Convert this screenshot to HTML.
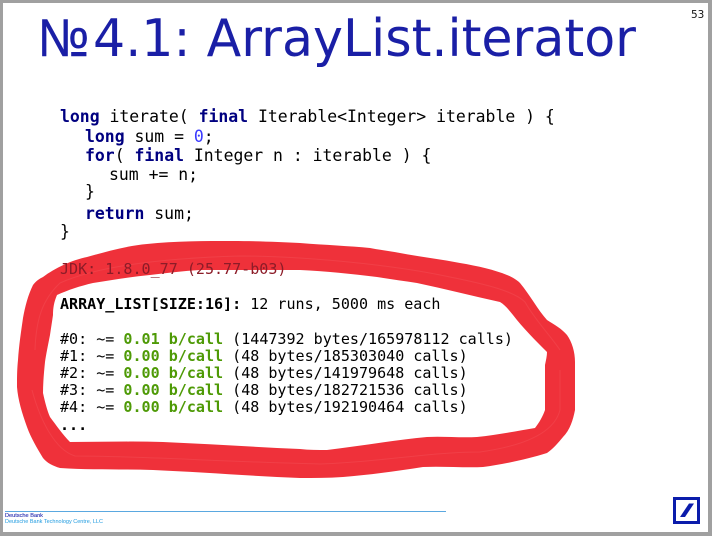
<!DOCTYPE html>
<html><head><meta charset="utf-8"><style>
html,body{margin:0;padding:0;background:#a0a0a0;width:712px;height:536px;overflow:hidden}
svg{position:absolute;left:0;top:0;display:block}
text{white-space:pre}
.c{font-family:"DejaVu Sans Mono",monospace;font-size:16.46px;fill:#000}
.o{font-family:"DejaVu Sans Mono",monospace;font-size:15.06px;fill:#000}
.k{font-weight:bold;fill:#000080}
.g{font-weight:bold;fill:#4e9a06}
.b{font-weight:bold}
</style></head><body>
<svg width="712" height="536" viewBox="0 0 712 536" xmlns="http://www.w3.org/2000/svg">
<rect x="3" y="3" width="705" height="529" fill="#fff"/>
<text x="38" y="56" font-family="'Liberation Sans',sans-serif" font-size="53" fill="#1a1fa6" stroke="#1a1fa6" stroke-width=".5" textLength="51" lengthAdjust="spacingAndGlyphs">№</text>
<text x="93" y="56" font-family="'DejaVu Sans',sans-serif" font-size="52" fill="#1a1fa6" textLength="543" lengthAdjust="spacingAndGlyphs">4.1: ArrayList.iterator</text>
<text x="691" y="18" font-family="'DejaVu Sans',sans-serif" font-size="10.5" fill="#111">53</text>

<text class="c" x="60" y="122"><tspan class="k">long</tspan> iterate( <tspan class="k">final</tspan> Iterable&lt;Integer&gt; iterable ) {</text>
<text class="c" x="85" y="142"><tspan class="k">long</tspan> sum = <tspan fill="#3a3aff">0</tspan>;</text>
<text class="c" x="85" y="161"><tspan class="k">for</tspan>( <tspan class="k">final</tspan> Integer n : iterable ) {</text>
<text class="c" x="109" y="180">sum += n;</text>
<text class="c" x="85" y="197">}</text>
<text class="c" x="85" y="219"><tspan class="k">return</tspan> sum;</text>
<text class="c" x="60" y="237">}</text>

<text class="o" x="60" y="309"><tspan class="b">ARRAY_LIST[SIZE:16]:</tspan> 12 runs, 5000 ms each</text>
<text class="o" x="60" y="344">#0: ~= <tspan class="g">0.01 b/call</tspan> (1447392 bytes/165978112 calls)</text>
<text class="o" x="60" y="361">#1: ~= <tspan class="g">0.00 b/call</tspan> (48 bytes/185303040 calls)</text>
<text class="o" x="60" y="378">#2: ~= <tspan class="g">0.00 b/call</tspan> (48 bytes/141979648 calls)</text>
<text class="o" x="60" y="395">#3: ~= <tspan class="g">0.00 b/call</tspan> (48 bytes/182721536 calls)</text>
<text class="o" x="60" y="412">#4: ~= <tspan class="g">0.00 b/call</tspan> (48 bytes/192190464 calls)</text>
<text class="o b" x="60" y="430">...</text>

<path fill="#ee2029" fill-opacity=".92" fill-rule="evenodd" d="M43 277 C55 268 72 260 87 257 C105 252 125 246 147 244 C175 241 205 241 233 241 C255 241 280 242 300 243 C325 245 350 246 370 248 C380 250 390 251 400 253 C420 257 440 259 460 263 C478 266 495 270 507 275 C512 277 517 280 520 283 C530 295 538 310 547 320 C555 325 562 329 567 335 C572 342 575 352 575 362 L575 410 C573 420 570 430 563 437 C558 443 553 449 547 453 C528 459 505 464 483 467 C465 468 443 466 423 467 C397 471 370 475 343 477 C328 478 314 478 300 478 C250 476 200 472 153 470 C122 469 90 470 60 468 C53 466 47 463 43 458 C37 448 31 438 27 427 C22 413 18 400 17 387 C17 378 17 370 18 360 C19 345 21 332 23 318 C25 307 28 295 33 285 C36 281 39 279 43 277 Z
M57 295 C54 302 53 308 53 315 C52 322 51 328 50 335 C48 345 46 355 45 362 C44 372 43 383 43 393 C45 402 47 410 50 417 C56 425 63 435 70 442 C100 442 132 441 163 442 C210 444 255 447 300 449 C309 450 318 450 327 450 C360 446 395 440 427 437 C443 436 460 438 477 437 C497 435 517 431 535 428 C539 423 543 416 545 410 L545 365 C546 360 547 356 547 352 C535 340 523 328 513 315 C509 310 505 305 500 302 C473 296 445 289 417 283 C404 281 390 279 377 277 C352 274 325 271 300 270 C270 270 235 270 200 270 C183 271 167 273 150 275 C130 277 112 280 93 283 C80 286 68 290 57 295 Z"/>
<g fill="none" stroke="#f4555c" stroke-width="1" opacity=".4">
<path d="M35 350 C36 320 42 300 60 283 C100 265 170 258 240 256 C300 256 390 264 450 277 C490 285 515 292 525 302 C535 320 550 335 560 350"/>
<path d="M560 370 L560 410 C555 430 530 445 480 452 C430 452 380 462 320 464 C230 462 140 456 75 456 C55 450 40 420 32 390"/>
</g>
<text x="60" y="274" font-family="'DejaVu Sans Mono',monospace" font-size="15.06" fill="#8c1c28">JDK: 1.8.0_77 (25.77-b03)</text>

<rect x="5" y="511" width="441" height="1" fill="#5aa8e0"/>
<text x="5" y="517" font-family="'Liberation Sans',sans-serif" font-size="5.3" fill="#2a2fb0" stroke="#2a2fb0" stroke-width=".12" textLength="38" lengthAdjust="spacingAndGlyphs">Deutsche Bank</text>
<text x="5" y="523" font-family="'Liberation Sans',sans-serif" font-size="5.3" fill="#1f9be0" textLength="98" lengthAdjust="spacingAndGlyphs">Deutsche Bank Technology Centre, LLC</text>

<rect x="674.5" y="498.5" width="24" height="24" fill="#fff" stroke="#0b1cab" stroke-width="3"/>
<path d="M680 517 L685 517 L694 503.500 L689 503.500 Z" fill="#0b1cab"/>
</svg>
</body></html>
